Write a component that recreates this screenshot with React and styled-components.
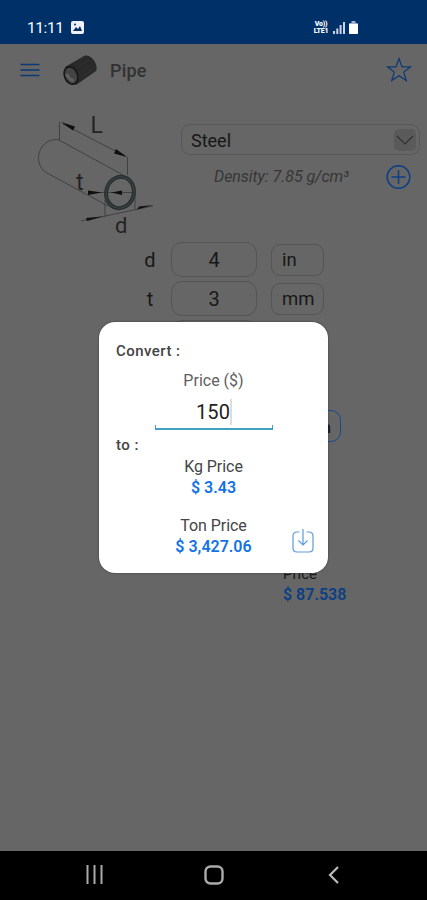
import React from 'react';
import styled, { createGlobalStyle } from 'styled-components';

const Global = createGlobalStyle`
  * { box-sizing: border-box; }
  body { margin: 0; background: #666; font-family: Roboto, sans-serif; }
  svg { display: block; flex: none; }
`;

const Screen = styled.div`
  position: relative;
  width: 427px;
  height: 900px;
  display: flex;
  flex-direction: column;
  overflow: hidden;
  background: #666;
  color: #181818;
`;

const StatusBar = styled.header`
  height: 44px;
  flex: none;
  display: flex;
  align-items: center;
  padding: 11px 69px 0 27px;
  background: #003068;
  color: #fff;
`;

const Clock = styled.span`
  width: 44px;
  font-size: 15.5px;
  font-weight: 400;
  line-height: 18px;
  letter-spacing: -0.4px;
`;

const StatusIcons = styled.div`
  display: flex;
  align-items: center;
  gap: 4px;
  margin-left: auto;
`;

const Network = styled.span`
  width: 16px;
  display: flex;
  flex-direction: column;
  align-items: center;
  font-size: 7px;
  font-weight: 900;
  line-height: 6.5px;
  letter-spacing: -0.2px;
`;

const AppBar = styled.div`
  height: 53px;
  flex: none;
  display: flex;
  align-items: center;
  padding: 0 15px 1px 20px;
`;

const PipePhoto = styled.svg`
  margin: 1px 0 0 22px;
`;

const Title = styled.h1`
  flex: 1;
  margin: 1px 0 0 11px;
  font-size: 18px;
  font-weight: 500;
  letter-spacing: 0.2px;
  color: #323232;
`;

const Material = styled.section`
  height: 145px;
  flex: none;
  display: flex;
  padding: 3px 7px 0 20px;
`;

const MaterialFields = styled.div`
  width: 239px;
  margin: 24px 0 0 11px;
`;

const Select = styled.div`
  height: 31px;
  display: flex;
  align-items: center;
  justify-content: space-between;
  padding: 1px 3px 0 9px;
  border: 1px solid #585858;
  border-radius: 9px;
  font-size: 18px;
  color: #161616;
`;

const SelectArrow = styled.span`
  width: 22px;
  height: 22px;
  display: flex;
  align-items: center;
  justify-content: center;
  border-radius: 5px;
  background: #5a5a5a;
`;

const DensityRow = styled.div`
  display: flex;
  align-items: center;
  justify-content: space-between;
  padding: 9px 9px 0 33px;
  font-size: 16px;
  font-style: italic;
  line-height: 26px;
  letter-spacing: -0.05px;
  color: #363636;
`;

const Dimensions = styled.section`
  height: 82px;
  flex: none;
  display: flex;
  flex-direction: column;
  gap: 4px;
  overflow: hidden;
`;

const DimensionRow = styled.div`
  height: 35px;
  flex: none;
  display: grid;
  grid-template-columns: 32px 86px 14px 53px;
  align-items: center;
  margin-left: 139px;
  font-size: 20px;
`;

const DimensionName = styled.span`
  width: 22px;
  text-align: center;
`;

const Field = styled.div`
  grid-column: ${p => (p.$unit ? 4 : 2)};
  height: ${p => (p.$unit ? 32 : 35)}px;
  display: flex;
  align-items: center;
  justify-content: ${p => (p.$unit ? 'flex-start' : 'center')};
  padding-left: ${p => (p.$unit ? 10 : 0)}px;
  border: 1px solid #555;
  border-radius: ${p => (p.$unit ? 9 : 11)}px;
  font-size: ${p => (p.$unit ? 18.5 : 20)}px;
`;

const Results = styled.section`
  flex: 1;
  display: flex;
  flex-direction: column;
  padding-top: 86px;
`;

const CalcButton = styled.div`
  width: 80px;
  height: 32px;
  display: flex;
  align-items: center;
  justify-content: flex-end;
  margin-left: 261px;
  padding: 2px 9px 0 0;
  border: 1px solid #164a91;
  border-radius: 10px;
  font-size: 17px;
  font-weight: 500;
  color: #111;
`;

const PriceSummary = styled.div`
  margin: 122px 0 0 283px;
  font-size: 15px;
  line-height: 21px;
`;

const Money = styled.div`
  font-size: 16px;
  font-weight: 600;
  line-height: 20px;
  color: ${p => (p.$dim ? '#0b3f83' : '#1273e6')};
`;

const Dialog = styled.div`
  position: absolute;
  left: 99px;
  top: 322px;
  width: 229px;
  height: 251px;
  display: flex;
  flex-direction: column;
  padding-top: 19px;
  border-radius: 16px;
  background: #fff;
  box-shadow: 0 0 2px #333;
  color: #444;
`;

const DialogLabel = styled.div`
  margin-left: 17px;
  font-size: 15px;
  font-weight: 500;
  line-height: 20px;
  letter-spacing: 0.45px;
`;

const Caption = styled.div`
  font-size: 16px;
  line-height: 20px;
  text-align: center;
  letter-spacing: -0.05px;
`;

const PriceCaption = styled(Caption)`
  margin-top: 10px;
  color: #606060;
  letter-spacing: 0;
`;

const PriceInput = styled.div`
  position: relative;
  width: 118px;
  height: 38px;
  display: flex;
  align-items: center;
  justify-content: center;
  margin: 1px 0 5px 56px;
  padding-top: 3px;
  border-bottom: 2px solid #43a0c5;
  font-size: 20px;
  letter-spacing: 0.1px;
  color: #222;
  &::before, &::after {
    content: '';
    position: absolute;
    bottom: 0;
    width: 1px;
    height: 3px;
    background: #43a0c5;
  }
  &::before { left: 0; }
  &::after { right: 0; }
`;

const Caret = styled.span`
  width: 2px;
  height: 26px;
  background: #ddd;
`;

const Result = styled.div`
  display: flex;
  flex-direction: column;
  align-items: center;
  gap: 1px;
  margin-top: ${p => p.$gap}px;
`;

const ExportIcon = styled.svg`
  position: absolute;
  right: 14px;
  bottom: 20px;
`;

const NavBar = styled.nav`
  height: 49px;
  flex: none;
  display: grid;
  grid-template-columns: 120px 120px 119px;
  align-items: center;
  justify-items: center;
  margin-top: auto;
  padding: 0 0 2px 34px;
  background: #000;
`;

const PipeDiagram = () => (
  <svg width="150" height="138" viewBox="0 0 150 138" fill="none">
    <g stroke="#414141" strokeWidth="1">
      <path d="M39.500 22v18M107.500 57v18M85 100v17M115 94v15" />
      <path d="M39 40C26 37 16 51 19 62c1 5 4 9 8 11L88 106M39 40l64 35" />
      <path d="M43 24l62 32M68 92.500h47M61 121l72-15" />
    </g>
    <path d="M41 22l14 4.500-2 4zM107 57l-13-3.500 2-4.500zM82 92.500l-14-2v4.500zM91 92.500l11-2v4.500zM83 116.500l-17 1.500 1 3zM117 109.500l16-4.500-14 1.500z" fill="#101010" />
    <ellipse cx="100" cy="92.500" rx="13.800" ry="15.800" transform="rotate(14 100 92.500)" stroke="#262d2e" strokeWidth="4" />
    <ellipse cx="100" cy="92.500" rx="13.800" ry="15.800" transform="rotate(14 100 92.500)" stroke="#394142" strokeWidth="1.500" />
    <g fill="#242424" fontFamily="Roboto, sans-serif" fontSize="23">
      <text x="70.500" y="32.500">L</text>
      <text x="56" y="90">t</text>
      <text x="95" y="133" fontSize="22">d</text>
    </g>
  </svg>
);

export default function App() {
  return (
    <>
      <Global />
      <Screen>
        <StatusBar>
          <Clock>11:11</Clock>
          <svg width="13" height="13" viewBox="0 0 13 13">
            <rect width="13" height="13" rx="2" fill="#eef1ff" />
            <path d="M2 10l3-4 2 2 2-3 2 5z" fill="#063060" />
            <circle cx="4" cy="3.500" r="1" fill="#063060" />
          </svg>
          <StatusIcons>
            <Network><span>Vo))</span><span>LTE1</span></Network>
            <svg width="12" height="12" viewBox="0 0 12 12" fill="#cbd5e8">
              <path d="M0 9h2v3H0zM3.300 6.500h2V12h-2zM6.600 3h2v9h-2zM10 0h2v12h-2z" />
            </svg>
            <svg width="9" height="13" viewBox="0 0 9 13">
              <path d="M2.500 0h4v2H8q1 0 1 1v9q0 1-1 1H1q-1 0-1-1V3q0-1 1-1h1.500z" fill="#9db0cf" />
              <path d="M0 3h9v9q0 1-1 1H1q-1 0-1-1z" fill="#fff" />
            </svg>
          </StatusIcons>
        </StatusBar>

        <AppBar>
          <svg width="20" height="14" viewBox="0 0 20 14" stroke="#0c3975" strokeWidth="1.600">
            <path d="M.5 1.500h19M.5 7h19M.5 12.500h19" />
          </svg>
          <PipePhoto width="37" height="33" viewBox="0 0 37 33">
            <path d="M3 13L22 2c7-3 15 9 12 15L14 31z" fill="#292929" />
            <path d="M14 14L27 6M16 19l14-8M17 24l14-8" stroke="#303030" strokeWidth="1" />
            <ellipse cx="9" cy="21.500" rx="6.500" ry="9" transform="rotate(-22 9 21.500)" fill="#444" stroke="#181818" strokeWidth="1.700" />
            <path d="M4.500 20q2 5 7 7" fill="none" stroke="#606060" strokeWidth="3" />
          </PipePhoto>
          <Title>Pipe</Title>
          <svg width="26" height="26" viewBox="0 0 26 26" fill="none" stroke="#0c3975" strokeWidth="1.200">
            <path d="M13 1.500l3 8.300h8.500l-6.800 5.300 2.600 8.500-7.300-4.900-7.300 4.900 2.600-8.500-6.800-5.300H10z" />
          </svg>
        </AppBar>

        <Material>
          <PipeDiagram />
          <MaterialFields>
            <Select>
              Steel
              <SelectArrow>
                <svg width="18" height="11" viewBox="0 0 18 11" fill="none" stroke="#303030" strokeWidth="1.100">
                  <path d="M1 1l8 8 8-8" />
                </svg>
              </SelectArrow>
            </Select>
            <DensityRow>
              Density: 7.85 g/cm³
              <svg width="25" height="25" viewBox="0 0 25 25" fill="none" stroke="#0c3f88" strokeWidth="1.500">
                <circle cx="12.500" cy="12" r="11.300" />
                <path d="M12.500 5v14M5.500 12h14" />
              </svg>
            </DensityRow>
          </MaterialFields>
        </Material>

        <Dimensions>
          <DimensionRow><DimensionName>d</DimensionName><Field>4</Field><Field $unit>in</Field></DimensionRow>
          <DimensionRow><DimensionName>t</DimensionName><Field>3</Field><Field $unit>mm</Field></DimensionRow>
          <DimensionRow><Field /><Field $unit /></DimensionRow>
        </Dimensions>

        <Results>
          <CalcButton>n</CalcButton>
          <PriceSummary>
            Price
            <Money $dim>$ 87.538</Money>
          </PriceSummary>
        </Results>

        <NavBar>
          <svg width="17" height="19" viewBox="0 0 17 19" stroke="#aaa" strokeWidth="2">
            <path d="M1.500 0v19M8.500 0v19M15.500 0v19" />
          </svg>
          <svg width="20" height="20" viewBox="0 0 20 20" fill="none" stroke="#aaa" strokeWidth="2.400">
            <rect x="1.500" y="1.500" width="17" height="17" rx="5" />
          </svg>
          <svg width="11" height="18" viewBox="0 0 11 18" fill="none" stroke="#bbb" strokeWidth="2.200">
            <path d="M10 1L2 9l8 8" />
          </svg>
        </NavBar>

        <Dialog>
          <DialogLabel>Convert :</DialogLabel>
          <PriceCaption>Price ($)</PriceCaption>
          <PriceInput>150<Caret /></PriceInput>
          <DialogLabel>to :</DialogLabel>
          <Result $gap={2}>
            <Caption>Kg Price</Caption>
            <Money>$ 3.43</Money>
          </Result>
          <Result $gap={18}>
            <Caption>Ton Price</Caption>
            <Money>$ 3,427.06</Money>
          </Result>
          <ExportIcon width="22" height="25" viewBox="0 0 22 25" fill="none" stroke="#5a9ddd" strokeWidth="1.200">
            <path d="M7.500 4H5Q1 4 1 8v12q0 4 4 4h12q4 0 4-4V8q0-4-4-4h-2.500M11 1v16M6.500 12.500L11 17l4.500-4.500" />
          </ExportIcon>
        </Dialog>
      </Screen>
    </>
  );
}
